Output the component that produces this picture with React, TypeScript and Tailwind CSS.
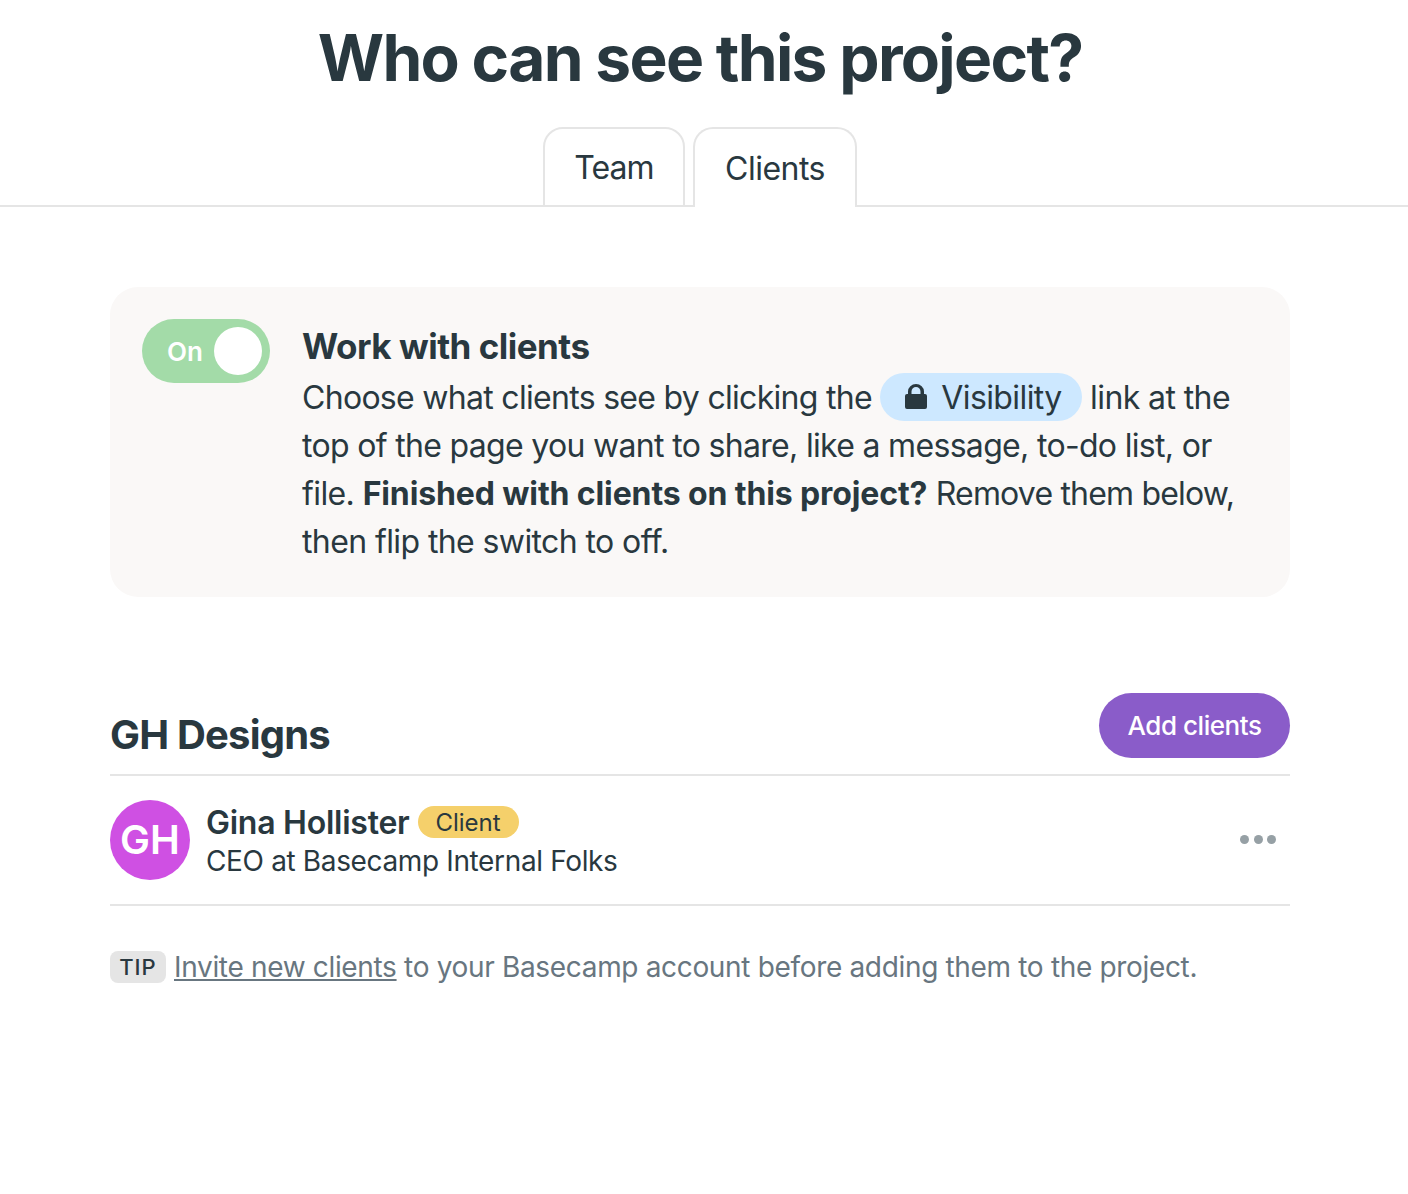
export default function App() {
  return (
    <div className="min-h-[1194px] bg-white text-[#29383f] font-['Inter','Liberation_Sans',sans-serif]">
      <h1 className="w-[1400px] pt-[19px] text-center text-[64px] leading-[78px] font-bold tracking-[-1.68px]">Who can see this project?</h1>
      <div className="mt-[30px] flex h-[80px] justify-center gap-2 border-b-2 border-[#e5e5e5] pr-[8px]">
        <div className="flex h-[80px] w-[142px] items-center justify-center rounded-t-[20px] border-2 border-[#e5e5e5] pt-[1px] text-[32px] tracking-[-0.95px]">Team</div>
        <div className="z-10 flex h-[80px] w-[164px] items-center justify-center rounded-t-[20px] border-2 border-b-0 border-[#e5e5e5] bg-white pt-[1px] text-[32px] tracking-[-0.5px]">Clients</div>
      </div>
      <div className="ml-[110px] mr-[118px] mt-[80px]">
        <div className="flex h-[310px] gap-[32px] rounded-[28px] bg-[#faf8f7] p-[32px]">
          <div className="flex h-[64px] w-[128px] shrink-0 items-center justify-between rounded-full bg-[#a3dba8] pl-[25px] pr-[8px] text-[26px] font-semibold text-white">
            <span>On</span>
            <span className="h-[48px] w-[48px] rounded-full bg-white" />
          </div>
          <div className="text-[32px] leading-[48px] tracking-[-0.6px]">
            <div className="mb-[4px] mt-[3px] text-[35px] leading-[48px] font-bold tracking-[-0.5px]">Work with clients</div>
            <div>
              <span className="tracking-[-0.7px]">Choose what clients see by clicking the </span>
              <span className="relative top-[-1px] inline-flex h-[48px] items-center gap-[14px] rounded-full bg-[#cde8ff] pl-[25px] pr-[20px] pt-[2px] align-top">
                <svg className="-mt-[3px]" width="22" height="26" viewBox="0 0 22 26" fill="#29383f">
                  <path d="M3 10V7.5a8 7.5 0 0 1 16 0V10h1a2 2 0 0 1 2 2v11a2 2 0 0 1-2 2H2a2 2 0 0 1-2-2V12a2 2 0 0 1 2-2zM6.5 10h9V7.5a4.5 4.5 0 0 0-9 0z" />
                </svg>
                Visibility
              </span>{" "}
              link at the <span className="tracking-[-0.68px]">top of the page you want to share, like a message, to-do list, or</span> file. <b className="font-bold tracking-[-0.12px]">Finished with clients on this project?</b> <span className="tracking-[-0.82px]">Remove them below,</span> then flip the switch to off.
            </div>
          </div>
        </div>
        <div className="mt-[96px] flex h-[83px] items-start justify-between border-b-2 border-[#e5e5e5]">
          <h2 className="mt-[18px] text-[40px] leading-[48px] font-bold tracking-[-0.8px]">GH Designs</h2>
          <div className="flex h-[65px] w-[191px] items-center justify-center rounded-full bg-[#8a5cc9] text-[26px] font-medium tracking-[-0.45px] text-white">Add clients</div>
        </div>
        <div className="flex h-[130px] items-center gap-4 border-b-2 border-[#e5e5e5]">
          <div className="flex h-[80px] w-[80px] items-center justify-center rounded-full bg-[#cf50e3] text-[40px] font-semibold text-white">GH</div>
          <div className="flex-1">
            <div className="flex h-[40px] items-center gap-2">
              <span className="mt-[2px] text-[32px] font-semibold tracking-[-0.25px]">Gina Hollister</span>
              <span className="flex h-[32px] w-[101px] items-center justify-center rounded-full bg-[#f5d06b] pt-[2px] text-[24px]">Client</span>
            </div>
            <div className="translate-y-[1px] text-[28px] leading-[36px] tracking-[-0.36px]">CEO at Basecamp Internal Folks</div>
          </div>
          <div className="mb-[2px] mr-[14px] flex gap-[4.5px]">
            <span className="h-[9px] w-[9px] rounded-full bg-[#96a0a5]" />
            <span className="h-[9px] w-[9px] rounded-full bg-[#96a0a5]" />
            <span className="h-[9px] w-[9px] rounded-full bg-[#96a0a5]" />
          </div>
        </div>
        <div className="mt-[45px] flex items-center gap-2 text-[28px] leading-[32px] tracking-[-0.33px] text-[#687680]">
          <span className="flex h-[32px] w-[56px] items-center justify-center rounded-[8px] bg-[#e5e5e5] text-[22px] font-medium tracking-[1px] text-[#29383f]">TIP</span>
          <span><span className="underline">Invite new clients</span> to your Basecamp account before adding them to the project.</span>
        </div>
      </div>
    </div>
  );
}
